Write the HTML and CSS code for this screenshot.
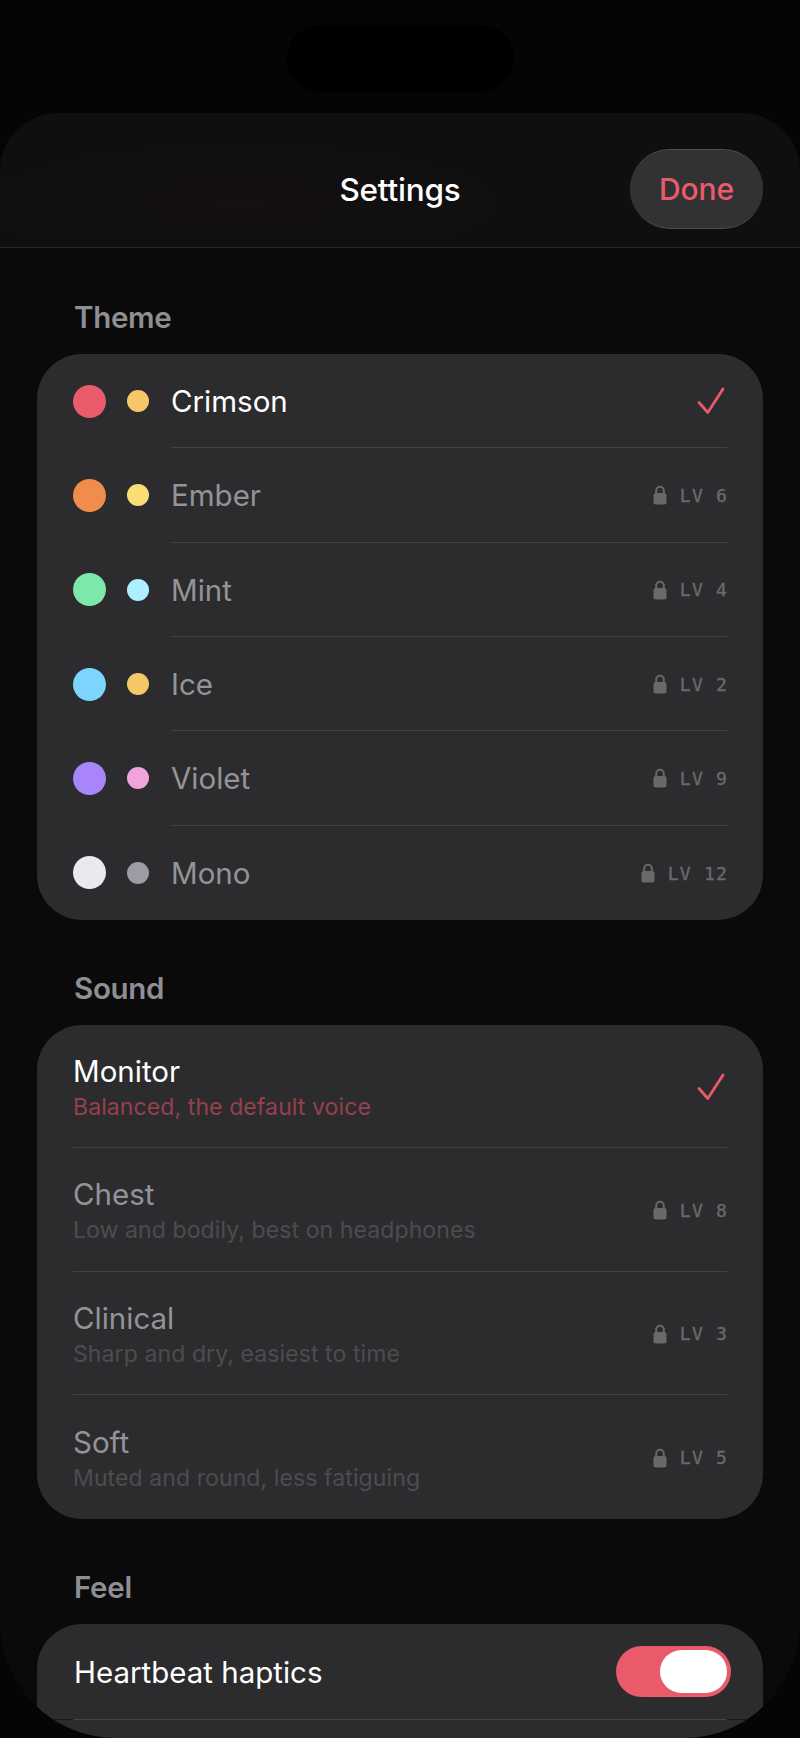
FILE: index.html
```html
<!DOCTYPE html>
<html lang="en">
<head>
  <meta charset="UTF-8">
  <meta name="viewport" content="width=device-width, initial-scale=1.0">
  <title>Settings</title>
  <link rel="stylesheet" href="styles.css">
</head>
<body>
  <svg class="defs" width="0" height="0">
    <symbol id="lock" viewBox="0 0 14 20">
      <path d="M3.2 9V5.6a3.8 3.8 0 0 1 7.6 0V9" fill="none" stroke="currentColor" stroke-width="2"/>
      <rect x="0.5" y="8" width="13" height="11.5" rx="2.2" fill="currentColor"/>
    </symbol>
    <symbol id="check" viewBox="0 0 28 28">
      <path d="M2 15.5 L10.8 25.5 L26 2" fill="none" stroke="currentColor" stroke-width="2.8" stroke-linecap="round" stroke-linejoin="round"/>
    </symbol>
  </svg>

  <div class="island-bar"><div class="island"></div></div>

  <div class="sheet">
    <header class="header">
      <h1>Settings</h1>
      <button class="done" type="button">Done</button>
    </header>

    <main class="content">
      <section class="section">
        <h2>Theme</h2>
        <div class="card">
          <div class="theme-row">
            <span class="dot" style="background:#e95b6a"></span>
            <span class="dot-small" style="background:#f6c766"></span>
            <div class="theme-body current">
              <span class="name">Crimson</span>
              <svg class="check"><use href="#check"/></svg>
            </div>
          </div>
          <div class="theme-row">
            <span class="dot" style="background:#f08c4c"></span>
            <span class="dot-small" style="background:#fbdd76"></span>
            <div class="theme-body">
              <span class="name">Ember</span>
              <span class="level"><svg class="lock"><use href="#lock"/></svg>LV 6</span>
            </div>
          </div>
          <div class="theme-row">
            <span class="dot" style="background:#7ee8ac"></span>
            <span class="dot-small" style="background:#aef0ff"></span>
            <div class="theme-body">
              <span class="name">Mint</span>
              <span class="level"><svg class="lock"><use href="#lock"/></svg>LV 4</span>
            </div>
          </div>
          <div class="theme-row">
            <span class="dot" style="background:#7cd4ff"></span>
            <span class="dot-small" style="background:#f6c766"></span>
            <div class="theme-body">
              <span class="name">Ice</span>
              <span class="level"><svg class="lock"><use href="#lock"/></svg>LV 2</span>
            </div>
          </div>
          <div class="theme-row">
            <span class="dot" style="background:#a985fb"></span>
            <span class="dot-small" style="background:#f0a3dc"></span>
            <div class="theme-body">
              <span class="name">Violet</span>
              <span class="level"><svg class="lock"><use href="#lock"/></svg>LV 9</span>
            </div>
          </div>
          <div class="theme-row">
            <span class="dot" style="background:#e9e9ef"></span>
            <span class="dot-small" style="background:#9c9ca4"></span>
            <div class="theme-body">
              <span class="name">Mono</span>
              <span class="level"><svg class="lock"><use href="#lock"/></svg>LV 12</span>
            </div>
          </div>
        </div>
      </section>

      <section class="section">
        <h2>Sound</h2>
        <div class="card">
          <div class="sound-row current">
            <div>
              <div class="name">Monitor</div>
              <div class="desc">Balanced, the default voice</div>
            </div>
            <svg class="check"><use href="#check"/></svg>
          </div>
          <div class="sound-row">
            <div>
              <div class="name">Chest</div>
              <div class="desc">Low and bodily, best on headphones</div>
            </div>
            <span class="level"><svg class="lock"><use href="#lock"/></svg>LV 8</span>
          </div>
          <div class="sound-row">
            <div>
              <div class="name">Clinical</div>
              <div class="desc">Sharp and dry, easiest to time</div>
            </div>
            <span class="level"><svg class="lock"><use href="#lock"/></svg>LV 3</span>
          </div>
          <div class="sound-row">
            <div>
              <div class="name">Soft</div>
              <div class="desc">Muted and round, less fatiguing</div>
            </div>
            <span class="level"><svg class="lock"><use href="#lock"/></svg>LV 5</span>
          </div>
        </div>
      </section>

      <section class="section">
        <h2>Feel</h2>
        <div class="card card-open">
          <div class="feel-row">
            <span class="name current-name">Heartbeat haptics</span>
            <div class="toggle"><div class="knob"></div></div>
          </div>
          <div class="feel-divider"></div>
        </div>
      </section>
    </main>
  </div>
</body>
</html>
```

FILE: styles.css
```css
* {
  box-sizing: border-box;
}
html, body {
  margin: 0;
  padding: 0;
  height: 1738px;
  overflow: hidden;
}
body {
  background-color: #050505;
  color: #fff;
  font-family: Inter, "Noto Sans", sans-serif;
}
.defs {
  position: absolute;
}
.island-bar {
  height: 113px;
  padding-top: 25px;
  display: flex;
  justify-content: center;
}
.island {
  width: 227px;
  height: 67px;
  border-radius: 34px;
  background-color: #000;
}
.sheet {
  height: 1625px;
  overflow: hidden;
  border-radius: 58px 58px 116px 116px;
  background-color: #0a0a0a;
}
.header {
  height: 135px;
  padding: 36px 37px 18px;
  display: grid;
  grid-template-columns: 1fr auto 1fr;
  align-items: center;
  border-bottom: 1px solid #29292b;
  background:
    radial-gradient(ellipse 260px 60px at 240px 90px, rgba(70, 20, 30, 0.1), transparent),
    #0f0f10;
}
.header h1 {
  grid-column: 2;
  margin: 0;
  font-size: 31.5px;
  font-weight: 550;
  letter-spacing: -0.2px;
}
.done {
  grid-column: 3;
  justify-self: end;
  width: 133px;
  height: 80px;
  border: none;
  border-top: 1px solid #4e4e50;
  border-bottom: 1px solid #4a4a4c;
  border-radius: 40px;
  background-color: #323234;
  color: #e95b6a;
  font-family: inherit;
  font-size: 30px;
  font-weight: 550;
  letter-spacing: -0.1px;
}
.content {
  padding: 53px 37px 0;
}
.section {
  margin-bottom: 52px;
}
.section h2 {
  height: 32px;
  margin: 0 0 21px;
  padding-left: 37px;
  color: #8e8e93;
  font-size: 29.5px;
  line-height: 32px;
  font-weight: 600;
  letter-spacing: -0.3px;
}
.card {
  border-radius: 45px;
  background-color: #2c2c2e;
}
.card-open {
  height: 160px;
}
.name {
  font-size: 29.5px;
  line-height: 36px;
  color: #949498;
}
.current .name, .current-name {
  color: #fff;
}
.theme-row {
  height: 94.33px;
  padding: 0 36px;
  display: flex;
  align-items: center;
}
.dot {
  width: 33px;
  height: 33px;
  margin-right: 21px;
  border-radius: 50%;
  flex-shrink: 0;
}
.dot-small {
  width: 22px;
  height: 22px;
  margin-right: 22px;
  border-radius: 50%;
  flex-shrink: 0;
}
.theme-body {
  flex: 1;
  height: 100%;
  display: flex;
  align-items: center;
  justify-content: space-between;
  border-bottom: 1px solid #434346;
}
.theme-body .name {
  margin-top: 1px;
}
.theme-row:last-child .theme-body, .sound-row:last-child {
  border-bottom: none;
}
.sound-row {
  height: 123.5px;
  margin: 0 36px;
  padding-top: 2px;
  display: flex;
  align-items: center;
  justify-content: space-between;
  border-bottom: 1px solid #434346;
}
.sound-row .level {
  margin-top: -2px;
}
.desc {
  margin-top: 3px;
  color: #4c4c50;
  font-size: 23px;
  line-height: 30px;
  letter-spacing: 0.1px;
}
.current .desc {
  color: #96404e;
}
.check {
  width: 28px;
  height: 28px;
  margin-right: 2px;
  color: #e95b6a;
}
.level {
  display: flex;
  align-items: center;
  margin-right: -1px;
  padding-top: 1px;
  color: #69696c;
  font-family: "DejaVu Sans Mono", "Liberation Mono", monospace;
  font-size: 18px;
  -webkit-text-stroke: 0.35px #69696c;
  letter-spacing: 1.2px;
  white-space: pre;
}
.lock {
  width: 14px;
  height: 20px;
  margin-right: 13px;
}
.feel-row {
  height: 95px;
  padding: 0 32px 0 37px;
  display: flex;
  align-items: center;
  justify-content: space-between;
}
.current-name {
  margin-top: 2px;
}
.feel-divider {
  height: 1px;
  background: linear-gradient(to right, #18181a 36px, #434346 36px, #434346 690px, #18181a 690px);
}
.toggle {
  width: 115px;
  height: 51px;
  padding: 4px;
  display: flex;
  justify-content: flex-end;
  border-radius: 26px;
  background-color: #e95b6a;
}
.knob {
  width: 67px;
  height: 43px;
  border-radius: 22px;
  background-color: #fff;
}
```
